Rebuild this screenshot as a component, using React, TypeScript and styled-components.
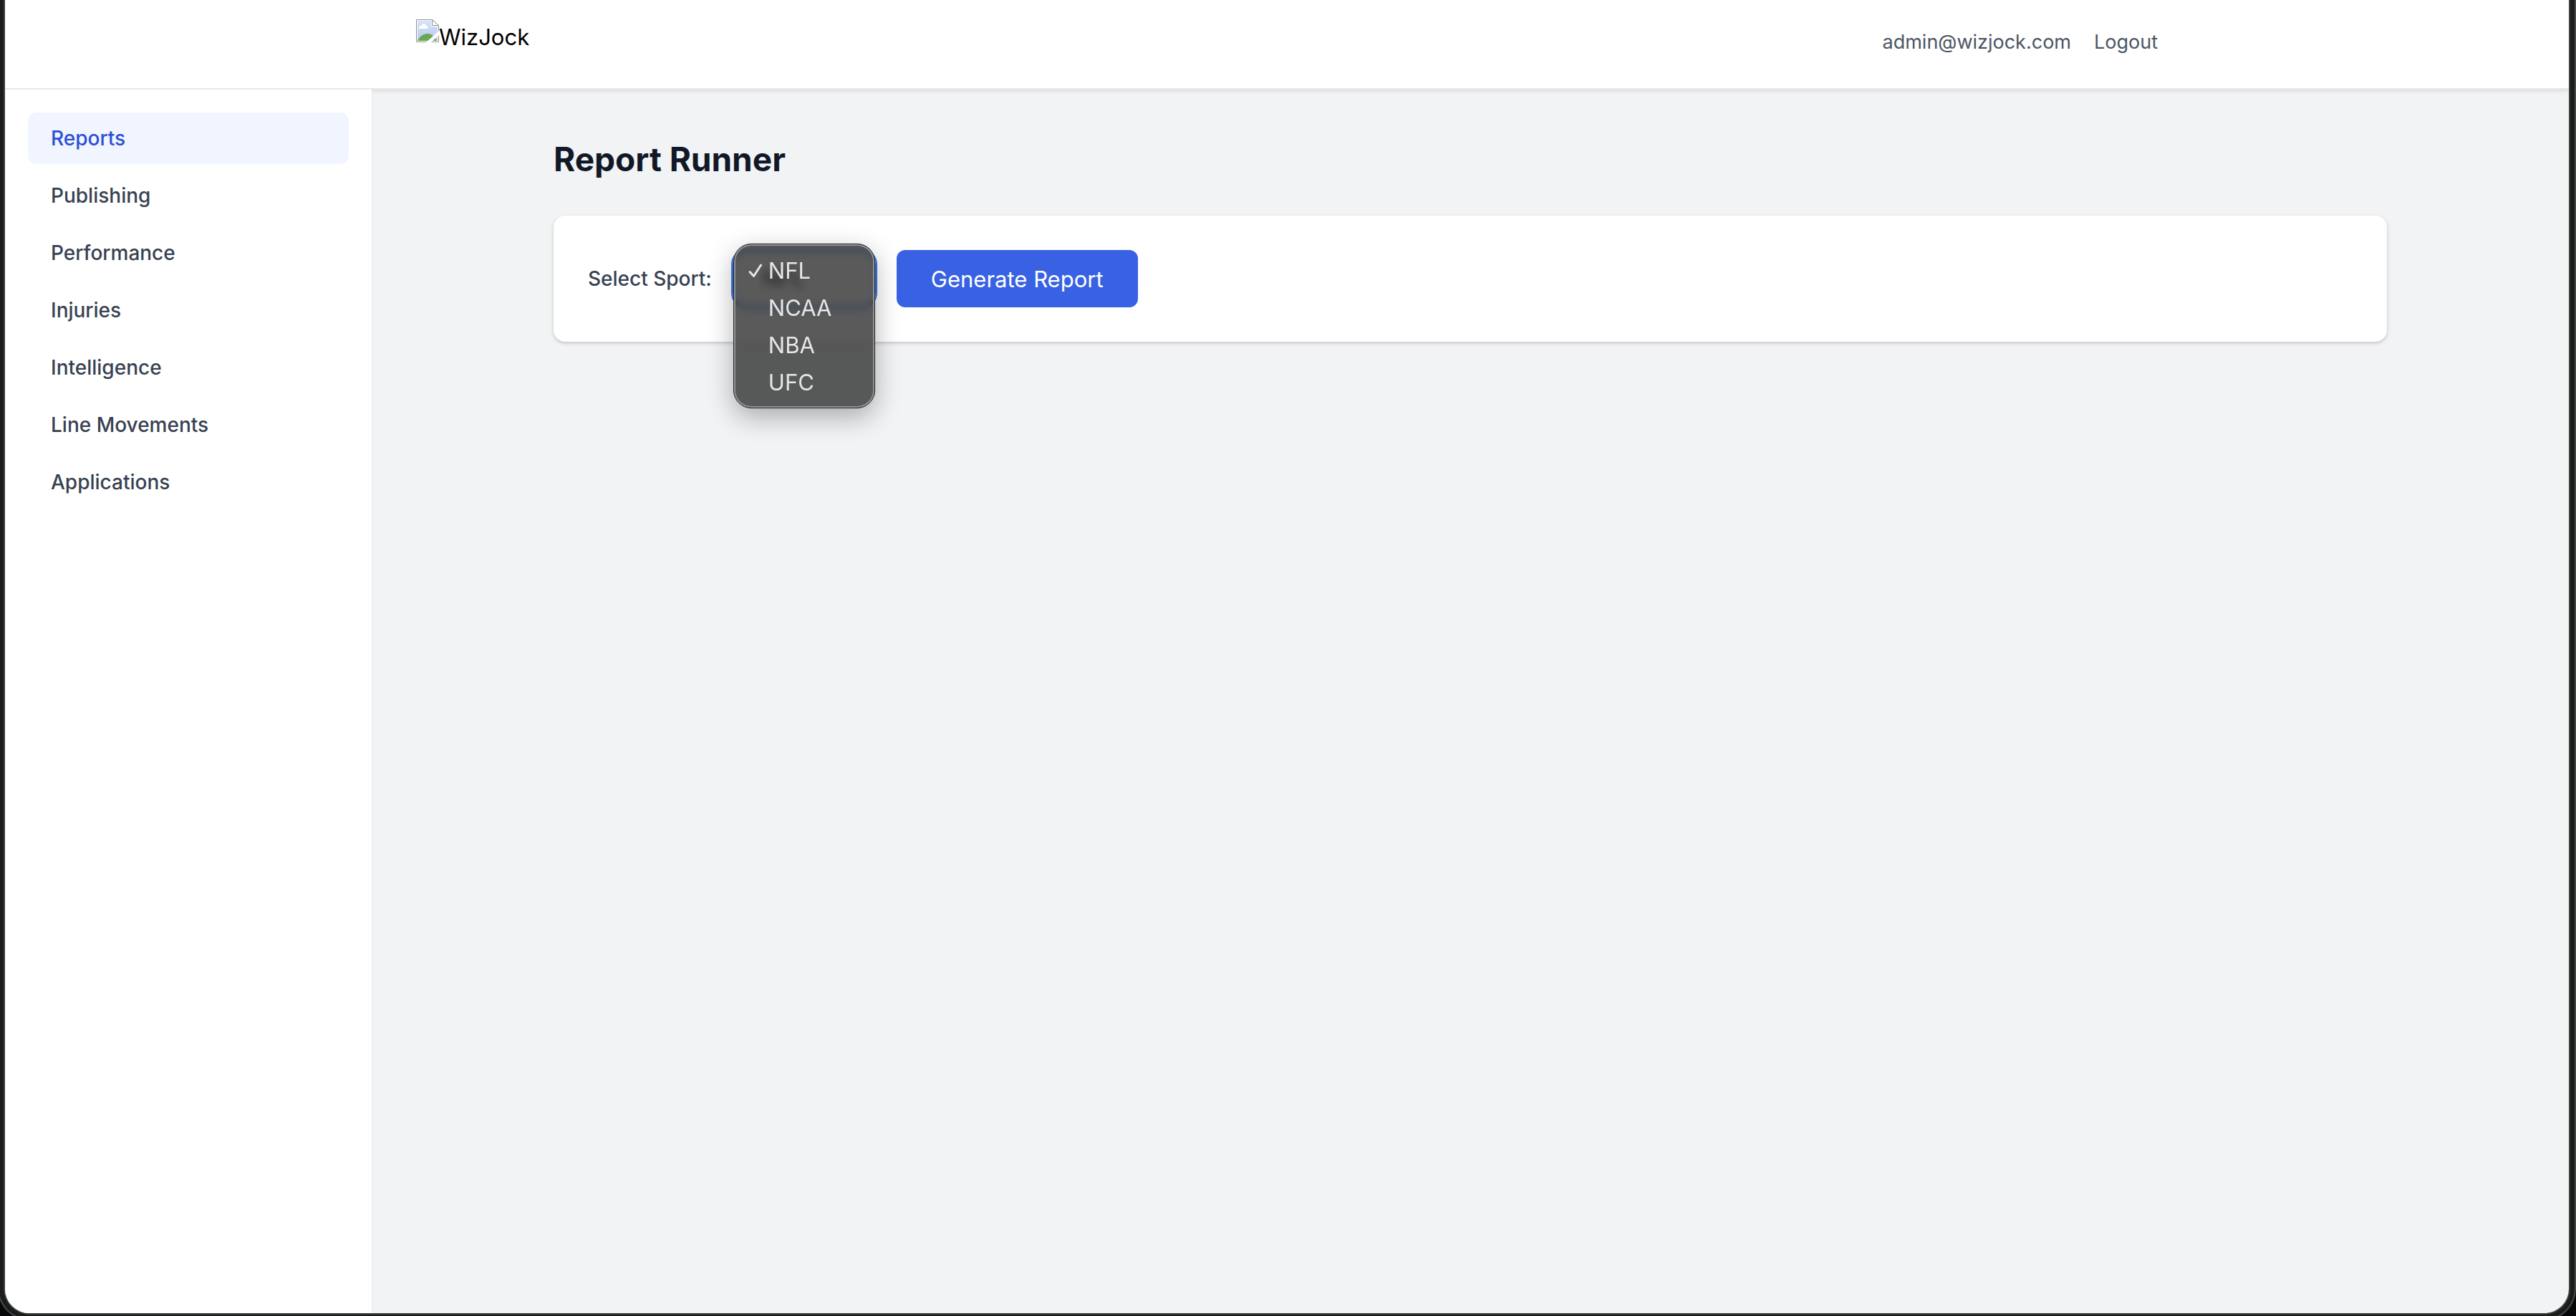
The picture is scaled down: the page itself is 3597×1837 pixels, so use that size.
import { useState } from "react";
import styled, { createGlobalStyle } from "styled-components";

const colors = {
  ink: "#111827",
  body: "#374151",
  muted: "#4b5563",
  line: "#e5e7eb",
  canvas: "#f2f3f5",
  blue: "#3862e3",
  blueText: "#2b4fd6",
  blueTint: "#f0f5ff",
};

const GlobalStyle = createGlobalStyle`
  *, *::before, *::after { box-sizing: border-box; }
  body {
    margin: 0;
    background: #050808;
    font-family: Inter, "Liberation Sans", sans-serif;
    font-size: 31px;
    line-height: 50px;
    color: #000;
  }
`;

const Desktop = styled.div`
  height: 100vh;
  overflow: hidden;
`;

const WindowFrame = styled.div`
  display: flex;
  height: calc(100vh + 6px);
  margin-left: -3px;
  padding: 0 6px 6px;
  background: #1b1d1b;
  border: 2px solid #464848;
  border-top: 0;
  border-radius: 0 0 44px 44px;
`;

const WindowContent = styled.div`
  flex: 1;
  display: flex;
  flex-direction: column;
  overflow: hidden;
  background: ${colors.canvas};
  border: 2px solid #3e4040;
  border-top: 0;
  border-radius: 0 0 36px 36px;
`;

const Header = styled.header`
  flex: none;
  padding-bottom: 5px;
  background: #fff;
  border-bottom: 2px solid ${colors.line};
  box-shadow: 0 2px 6px rgba(0, 0, 0, 0.1);
`;

const HeaderInner = styled.div`
  display: flex;
  align-items: center;
  justify-content: space-between;
  max-width: 2560px;
  height: 118px;
  margin: 0 auto;
  padding: 0 64px;
`;

const Brand = styled.a`
  display: flex;
  align-items: flex-start;
  height: 64px;
  color: #000;
  text-decoration: none;
`;

const Account = styled.div`
  display: flex;
  gap: 32px;
  font-size: 27px;
  line-height: 40px;
  color: ${colors.muted};
`;

const LogoutButton = styled.button`
  padding: 0;
  border: 0;
  background: none;
  color: inherit;
  font: inherit;
  cursor: pointer;
`;

const Body = styled.div`
  flex: 1;
  display: flex;
  min-height: 0;
`;

const Sidebar = styled.nav`
  position: relative;
  flex: none;
  display: flex;
  flex-direction: column;
  gap: 8px;
  width: 512px;
  padding: 32px;
  background: #fff;
  box-shadow: 0 2px 4px rgba(0, 0, 0, 0.05);
`;

const NavLink = styled.a<{ $active: boolean }>`
  padding: 16px 32px;
  border-radius: 12px;
  background: ${(p) => (p.$active ? colors.blueTint : "transparent")};
  color: ${(p) => (p.$active ? colors.blueText : colors.body)};
  font-size: 28px;
  font-weight: 500;
  line-height: 40px;
  text-decoration: none;
`;

const Main = styled.main`
  flex: 1;
  padding: 64px;
`;

const Container = styled.div`
  max-width: 2560px;
  margin: 0 auto;
`;

const Title = styled.h1`
  margin: 0 0 46px;
  color: ${colors.ink};
  font-size: 46px;
  font-weight: 700;
  line-height: 66px;
`;

const Card = styled.form`
  display: flex;
  align-items: center;
  gap: 29px;
  padding: 48px;
  background: #fff;
  border-radius: 16px;
  box-shadow: 0 2px 6px rgba(0, 0, 0, 0.1), 0 2px 4px rgba(0, 0, 0, 0.1);
`;

const Label = styled.label`
  color: ${colors.body};
  font-size: 28px;
  font-weight: 500;
  line-height: 40px;
`;

const Picker = styled.div`
  position: relative;
`;

const SportSelect = styled.select`
  display: block;
  appearance: none;
  width: 200px;
  height: 80px;
  padding: 0 40px;
  background: #fff;
  border: 2px solid #3b76e6;
  border-radius: 20px;
  outline: 2px solid #3b76e6;
  color: #000;
  font: inherit;
`;

const Menu = styled.ul`
  position: absolute;
  top: -9px;
  left: 1px;
  right: 1px;
  margin: 0;
  padding: 11px 0 9px;
  list-style: none;
  background: rgba(43, 43, 43, 0.78);
  backdrop-filter: blur(6px);
  border: 1px solid #202222;
  border-radius: 25px;
  box-shadow: inset 0 0 0 2px #929496, 0 12px 36px rgba(0, 0, 0, 0.3);
`;

const Option = styled.li`
  display: grid;
  grid-template-columns: 20px 1fr;
  align-items: center;
  column-gap: 8px;
  height: 52px;
  padding: 0 20px;
  color: #e6e6e6;
`;

const OptionText = styled.span`
  grid-column: 2;
`;

const SubmitButton = styled.button`
  height: 80px;
  padding: 2px 48px 0;
  border: 0;
  border-radius: 12px;
  background: ${colors.blue};
  color: #fff;
  font: inherit;
  cursor: pointer;
`;

const MissingImage = () => (
  <svg width="32" height="32" viewBox="0 0 32 32" aria-hidden="true">
    <defs>
      <linearGradient id="sky" x1="0" y1="0" x2="0" y2="1">
        <stop offset="0" stopColor="#d6e3fa" />
        <stop offset="1" stopColor="#b7c8ec" />
      </linearGradient>
    </defs>
    <path d="M0.5 0.5H22.5L31.5 9V31.5H0.5Z" fill="#fff" stroke="#8e9093" />
    <path d="M2 2H21V10H30V30H2Z" fill="url(#sky)" />
    <path d="M22.5 0.5V8.5H31.5Z" fill="#fff" stroke="#8e9093" />
    <path d="M4 13C3 10 6 9 7.500 9C8 5 13 5 14 9C16 9 17 11 16 13Z" fill="#fff" />
    <path d="M2 30C5 24 10 20 16 20C22 20 26 24 29 30Z" fill="#6aa84f" />
    <path d="M14 32L32 16V22L21 32Z" fill="#fff" />
  </svg>
);

const CheckMark = () => (
  <svg width="20" height="20" viewBox="0 0 20 20" fill="none" aria-hidden="true">
    <path
      d="M2 11.500L7.500 17.500L17.500 2"
      stroke="#e6e6e6"
      strokeWidth="3"
      strokeLinecap="round"
      strokeLinejoin="round"
    />
  </svg>
);

const pages = [
  "Reports",
  "Publishing",
  "Performance",
  "Injuries",
  "Intelligence",
  "Line Movements",
  "Applications",
];

const sports = ["NFL", "NCAA", "NBA", "UFC"];

export default function App() {
  const [page, setPage] = useState("Reports");
  const [sport, setSport] = useState("NFL");

  return (
    <>
      <GlobalStyle />
      <Desktop>
        <WindowFrame>
          <WindowContent>
            <Header>
              <HeaderInner>
                <Brand href="#home">
                  <MissingImage />
                  WizJock
                </Brand>
                <Account>
                  <span>admin@wizjock.com</span>
                  <LogoutButton type="button">Logout</LogoutButton>
                </Account>
              </HeaderInner>
            </Header>
            <Body>
              <Sidebar>
                {pages.map((name) => (
                  <NavLink
                    key={name}
                    href={`#${name.toLowerCase().replace(" ", "-")}`}
                    $active={name === page}
                    onClick={() => setPage(name)}
                  >
                    {name}
                  </NavLink>
                ))}
              </Sidebar>
              <Main>
                <Container>
                  <Title>Report Runner</Title>
                  <Card onSubmit={(e) => e.preventDefault()}>
                    <Label htmlFor="sport">Select Sport:</Label>
                    <Picker>
                      <SportSelect
                        id="sport"
                        value={sport}
                        onChange={(e) => setSport(e.target.value)}
                      >
                        {sports.map((name) => (
                          <option key={name}>{name}</option>
                        ))}
                      </SportSelect>
                      <Menu role="listbox" aria-label="Sport">
                        {sports.map((name) => (
                          <Option
                            key={name}
                            role="option"
                            aria-selected={name === sport}
                            onClick={() => setSport(name)}
                          >
                            {name === sport && <CheckMark />}
                            <OptionText>{name}</OptionText>
                          </Option>
                        ))}
                      </Menu>
                    </Picker>
                    <SubmitButton type="submit">Generate Report</SubmitButton>
                  </Card>
                </Container>
              </Main>
            </Body>
          </WindowContent>
        </WindowFrame>
      </Desktop>
    </>
  );
}
